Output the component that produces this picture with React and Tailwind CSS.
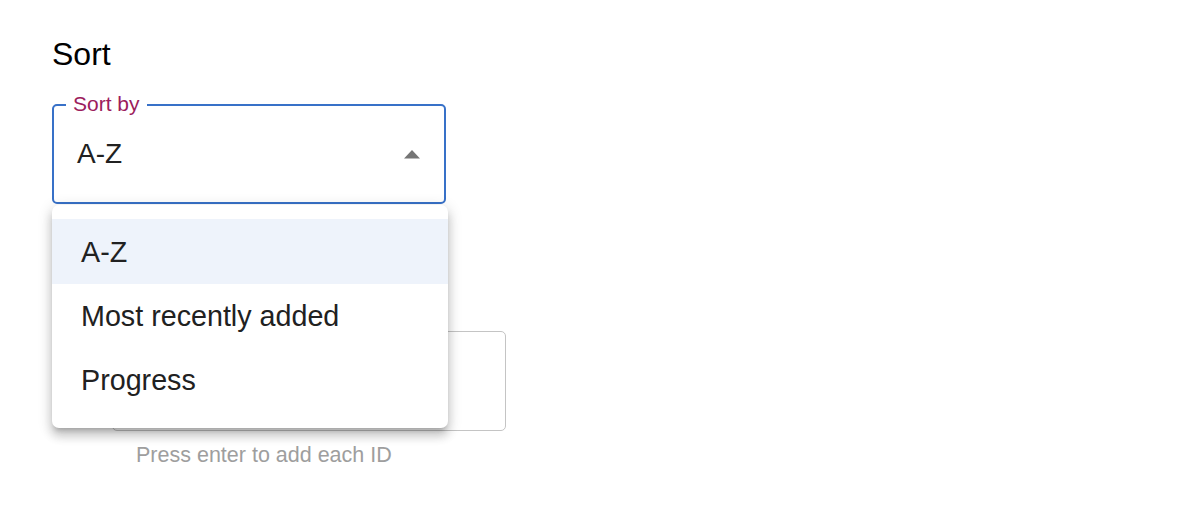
import React from 'react';

const options = ['A-Z', 'Most recently added', 'Progress'];

const SortSelect = () => {
  return (
    <div className="relative w-[394px]">
      {/* Outlined field, focused */}
      <div className="relative h-[100px] rounded-[5px] border-2 border-[#3871c8] flex items-center pl-[23px] pr-[24px]">
        <span className="absolute -top-[14px] left-[12px] bg-white px-[7px] text-[21px] leading-[24px] text-[#9c1c5c]">
          Sort by
        </span>
        <span className="flex-grow text-[28px] leading-[32px] text-[#212121]">A-Z</span>
        <svg width="18" height="10" viewBox="0 0 18 10" className="-mr-[1px]">
          <path d="M1 9.5 L9 1 L17 9.5 Z" fill="#757575" />
        </svg>
      </div>

      {/* Open menu */}
      <ul className="absolute left-0 top-[101px] z-10 w-[396px] rounded-[7px] bg-white pt-[14px] pb-[16px] shadow-[0_5px_5px_-3px_rgba(0,0,0,0.2),0_8px_10px_1px_rgba(0,0,0,0.14),0_3px_14px_2px_rgba(0,0,0,0.12)]">
        {options.map((opt, i) => (
          <li
            key={opt}
            className={`flex items-center pl-[29px] text-[28.7px] leading-[32px] text-[#212121] ${
              i === 0 ? 'h-[65px] bg-[#eef3fb]' : 'h-[64px]'
            }`}
          >
            {opt}
          </li>
        ))}
      </ul>
    </div>
  );
};

export default function App() {
  return (
    <div className="min-h-[514px] bg-white pl-[52px] pt-[36px] font-['Liberation_Sans',Arial,sans-serif]">
      <h2 className="text-[32px] leading-[36px] text-black">Sort</h2>

      <div className="mt-[32px]">
        <SortSelect />
      </div>

      {/* IDs input, partly under the menu */}
      <div className="ml-[60px] mt-[127px] w-[394px]">
        <div className="h-[100px] rounded-[5px] border border-[#c4c4c4]" />
        <p className="mt-[12px] pl-[24px] text-[21.5px] leading-[24px] text-[#9e9e9e]">
          Press enter to add each ID
        </p>
      </div>
    </div>
  );
}
